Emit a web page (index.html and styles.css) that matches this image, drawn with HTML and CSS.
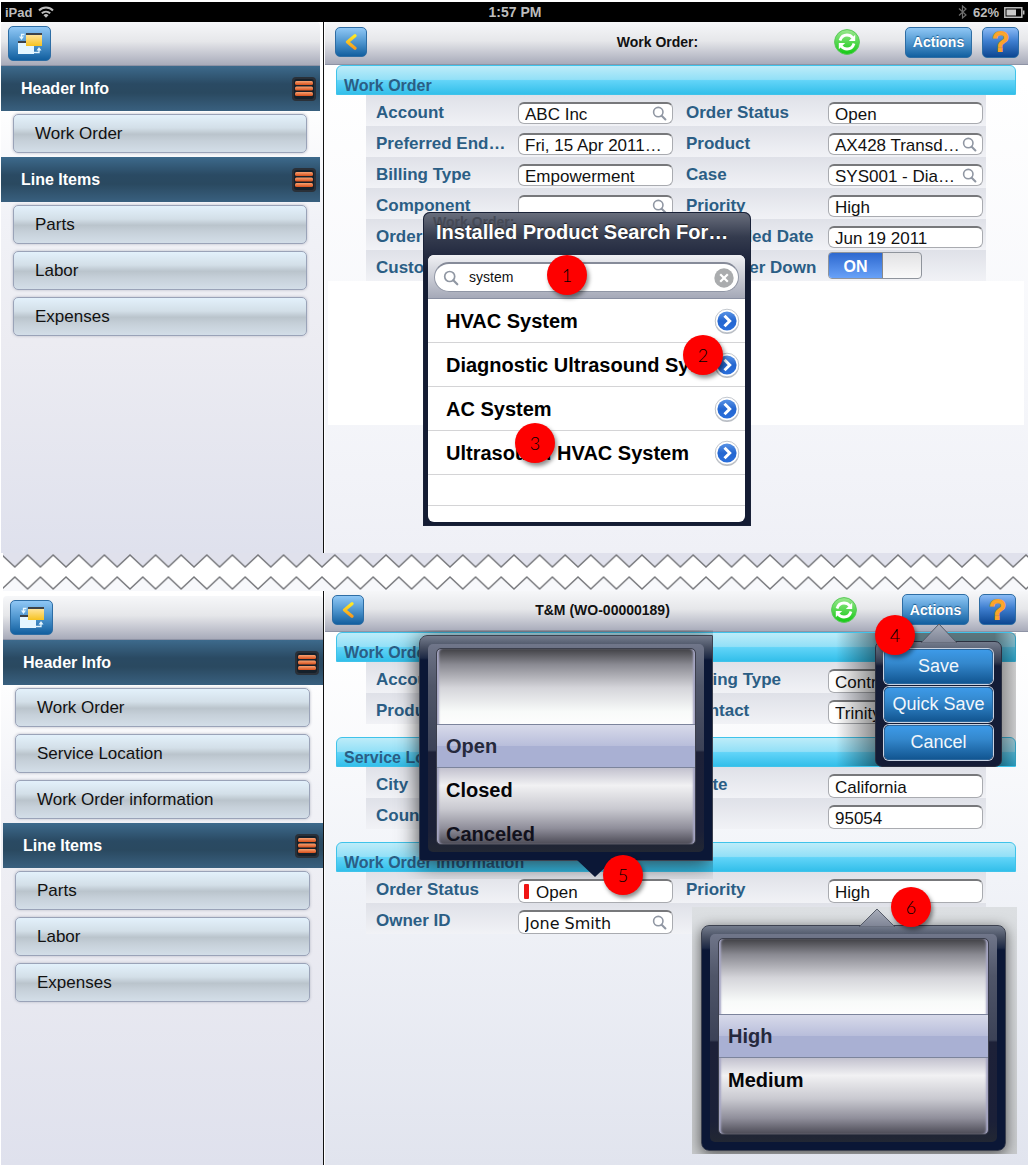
FILE: index.html
```html
<!DOCTYPE html>
<html lang="en">
<head>
<meta charset="utf-8">
<title>Work Order</title>
<link rel="stylesheet" href="styles.css">
</head>
<body>
<svg class="sprite" aria-hidden="true">
  <defs>
    <linearGradient id="gold" x1="0" y1="0" x2="0" y2="1"><stop offset="0" stop-color="#ffe49a"/><stop offset="1" stop-color="#f6c21f"/></linearGradient>
    <linearGradient id="green" x1="0" y1="0" x2="0" y2="1"><stop offset="0" stop-color="#9be88f"/><stop offset="1" stop-color="#12c912"/></linearGradient>
    <linearGradient id="blue" x1="0" y1="0" x2="0" y2="1"><stop offset="0" stop-color="#5a94e6"/><stop offset=".5" stop-color="#2466d0"/><stop offset="1" stop-color="#2a6fdc"/></linearGradient>
    <linearGradient id="chev" x1="0" y1="0" x2="0" y2="1"><stop offset="0" stop-color="#ffe925"/><stop offset="1" stop-color="#f99c1c"/></linearGradient>
    <linearGradient id="rust" x1="0" y1="0" x2="0" y2="1"><stop offset="0" stop-color="#f7a272"/><stop offset="1" stop-color="#d8501c"/></linearGradient>
    <linearGradient id="tip" x1="0" y1="0" x2="0" y2="1"><stop offset="0" stop-color="#a9aebb"/><stop offset="1" stop-color="#7d8394"/></linearGradient>
  </defs>
  <symbol id="i-switch" viewBox="0 0 26 22">
    <rect x="1" y="9" width="16" height="12" fill="#e4f6ff"/><rect x="1" y="8" width="16" height="2" fill="#3d4248"/>
    <rect x="9" y="2" width="16" height="11" fill="url(#gold)"/><rect x="9" y="0" width="16" height="2" fill="#3d4248"/>
    <path d="M7.500 1.500h-3V4" fill="none" stroke="#e4f6ff" stroke-width="1.300"/><path d="M2 3.500h5L4.500 7z" fill="#e4f6ff"/>
    <path d="M13 19.500h9V17" fill="none" stroke="#e4f6ff" stroke-width="1.300"/><path d="M19.500 17.500h5L22 14z" fill="#e4f6ff"/>
  </symbol>
  <symbol id="i-list" viewBox="0 0 24 24">
    <rect width="24" height="24" rx="4" fill="#2a3038"/><rect x="2" y="2" width="20" height="20" rx="3" fill="#15202a"/>
    <g fill="url(#rust)"><rect x="3" y="4" width="18" height="4" rx="1.500"/><rect x="3" y="9.500" width="18" height="4" rx="1.500"/><rect x="3" y="15" width="18" height="4" rx="1.500"/></g>
  </symbol>
  <symbol id="i-back" viewBox="0 0 12 16"><path d="M10 1.800L2.500 8l7.500 6.200" fill="none" stroke="url(#chev)" stroke-width="3.200" stroke-linecap="round" stroke-linejoin="round"/></symbol>
  <symbol id="i-sync" viewBox="0 0 26 26">
    <circle cx="13" cy="13" r="12.400" fill="url(#green)" stroke="#58c858"/>
    <path d="M6 11.500C7.200 7.600 10 6 13 6c2.600 0 4.400 1 5.800 2.800" fill="none" stroke="#fff" stroke-width="2.800"/>
    <path d="M21.200 5.800v6.200h-6.400z" fill="#fff"/>
    <path d="M20 14.500c-1.200 3.900-4 5.500-7 5.500-2.600 0-4.400-1-5.800-2.800" fill="none" stroke="#fff" stroke-width="2.800"/>
    <path d="M4.800 20.200V14h6.400z" fill="#fff"/>
  </symbol>
  <symbol id="i-find" viewBox="0 0 16 16"><circle cx="6.700" cy="6.500" r="5" fill="none" stroke="#9097a3" stroke-width="1.700"/><path d="M10.300 10.300l4 4" stroke="#9097a3" stroke-width="2.200" stroke-linecap="round"/></symbol>
  <symbol id="i-clear" viewBox="0 0 20 20"><circle cx="10" cy="10" r="9.700" fill="#aaacae"/><path d="M6.200 6.200l7.600 7.600M13.800 6.200l-7.600 7.600" stroke="#fff" stroke-width="2.200"/></symbol>
  <symbol id="i-go" viewBox="0 0 26 26">
    <circle cx="13" cy="14" r="12" fill="#8d949e" opacity=".6"/><circle cx="13" cy="13" r="11.800" fill="#fff" stroke="#b3b9c2" stroke-width=".8"/><circle cx="13" cy="13" r="9.600" fill="url(#blue)"/>
    <path d="M10.500 7.800l5.200 5.200-5.200 5.200" fill="none" stroke="#fff" stroke-width="3"/>
  </symbol>
</svg>

<header class="status">
  <span class="status-side">iPad
    <svg width="16" height="12" viewBox="0 0 16 12" aria-label="Wi-Fi"><g fill="none" stroke="#bdbdbd" stroke-width="2"><path d="M1 4.500C5 .5 11 .5 15 4.500"/><path d="M3.800 7.300c2.400-2.200 6-2.200 8.400 0"/></g><path d="M5.500 9.300a3.500 3.500 0 015 0L8 11.800z" fill="#bdbdbd"/></svg>
  </span>
  <span class="status-time">1:57 PM</span>
  <span class="status-side status-right">
    <svg width="10" height="14" viewBox="0 0 10 14" aria-label="Bluetooth"><path d="M1 3.500l7 6.500-3.500 3V1L8 4 1 10.500" fill="none" stroke="#6f6f6f" stroke-width="1.200"/></svg>
    <span>62%</span>
    <svg width="21" height="11" viewBox="0 0 21 11" aria-label="Battery"><path d="M.8.800h17v9.400H.8zM19.700 3.500v4" fill="none" stroke="#bdbdbd" stroke-width="1.500"/><path d="M2.500 2.500h9.500v6H2.500z" fill="#c9c9c9"/></svg>
  </span>
</header>

<section class="screen">
  <nav class="side">
    <div class="bar bar-side"><button class="btn btn-switch" aria-label="Switch view"><svg width="26" height="22"><use href="#i-switch"/></svg></button></div>
    <h2 class="group">Header Info <svg width="24" height="24"><use href="#i-list"/></svg></h2>
    <div class="items"><button>Work Order</button></div>
    <h2 class="group">Line Items <svg width="24" height="24"><use href="#i-list"/></svg></h2>
    <div class="items"><button>Parts</button><button>Labor</button><button>Expenses</button></div>
  </nav>
  <main class="main">
    <div class="bar">
      <button class="btn btn-back" aria-label="Back"><svg width="12" height="16"><use href="#i-back"/></svg></button>
      <h1 class="title title-wide">Work Order:</h1>
      <button class="sync" aria-label="Sync"><svg width="26" height="26"><use href="#i-sync"/></svg></button>
      <button class="btn btn-actions">Actions</button>
      <button class="btn btn-help" aria-label="Help">?</button>
    </div>
    <h2 class="caption">Work Order</h2>
    <div class="rows">
      <div class="row">
        <label for="a1">Account</label><div class="field"><input id="a1" value="ABC Inc"><svg width="15" height="15"><use href="#i-find"/></svg></div>
        <label for="a2">Order Status</label><div class="field"><input id="a2" value="Open"></div>
      </div>
      <div class="row">
        <label for="a3">Preferred End…</label><div class="field"><input id="a3" value="Fri, 15 Apr 2011…"></div>
        <label for="a4">Product</label><div class="field"><input id="a4" value="AX428 Transd…"><svg width="15" height="15"><use href="#i-find"/></svg></div>
      </div>
      <div class="row">
        <label for="a5">Billing Type</label><div class="field"><input id="a5" value="Empowerment"></div>
        <label for="a6">Case</label><div class="field"><input id="a6" value="SYS001 - Dia…"><svg width="15" height="15"><use href="#i-find"/></svg></div>
      </div>
      <div class="row">
        <label for="a7">Component</label><div class="field"><input id="a7" value=""><svg width="15" height="15"><use href="#i-find"/></svg></div>
        <label for="a8">Priority</label><div class="field"><input id="a8" value="High"></div>
      </div>
      <div class="row">
        <label for="a9">Order Type</label><div class="field"><input id="a9" value=""></div>
        <label for="a10">Scheduled Date</label><div class="field"><input id="a10" value="Jun 19 2011"></div>
      </div>
      <div class="row">
        <label for="a11">Customer</label><div class="field"><input id="a11" value=""></div>
        <label for="a12">Customer Down</label><div class="switch"><input type="checkbox" id="a12" checked><span>ON</span></div>
      </div>
    </div>
    <div class="blank"></div>

    <div class="lookup">
      <span class="lookup-ghost" aria-hidden="true">Work Order:</span>
      <h3>Installed Product Search For…</h3>
      <div class="lookup-body">
        <div class="lookup-search">
          <label class="pill"><svg width="16" height="16"><use href="#i-find"/></svg><input aria-label="Search" value="system"><svg width="20" height="20"><use href="#i-clear"/></svg></label>
        </div>
        <ul>
          <li><span>HVAC System</span><button aria-label="Details"><svg width="26" height="26"><use href="#i-go"/></svg></button></li>
          <li><span>Diagnostic Ultrasound System</span><button aria-label="Details"><svg width="26" height="26"><use href="#i-go"/></svg></button></li>
          <li><span>AC System</span><button aria-label="Details"><svg width="26" height="26"><use href="#i-go"/></svg></button></li>
          <li><span>Ultrasound HVAC System</span><button aria-label="Details"><svg width="26" height="26"><use href="#i-go"/></svg></button></li>
          <li class="short"></li>
          <li class="last"></li>
        </ul>
      </div>
      <span class="badge badge-1">1</span><span class="badge badge-2">2</span><span class="badge badge-3">3</span>
    </div>
  </main>
</section>

<svg class="tear" width="100%" height="38" aria-hidden="true">
  <defs>
    <pattern id="zigA" width="25.600" height="38" patternUnits="userSpaceOnUse" x="1"><path d="M0 0V2l12.800 12L25.600 2V0z" fill="#e0e1ec"/><path d="M-1 1L12.800 14 26.600 1" fill="none" stroke="#77787c" stroke-width="1.500"/></pattern>
    <pattern id="zigB" width="25.600" height="38" patternUnits="userSpaceOnUse" x="1"><path d="M0 38v-2l12.800-12 12.800 12v2z" fill="#f7f8fb"/><path d="M-1 37L12.800 24 26.600 37" fill="none" stroke="#77787c" stroke-width="1.500"/></pattern>
  </defs>
  <rect x="2" width="100%" height="38" fill="url(#zigA)"/><rect x="2" width="100%" height="38" fill="url(#zigB)"/>
</svg>

<section class="screen screen-2">
  <nav class="side">
    <div class="bar bar-side"><button class="btn btn-switch" aria-label="Switch view"><svg width="26" height="22"><use href="#i-switch"/></svg></button></div>
    <h2 class="group">Header Info <svg width="24" height="24"><use href="#i-list"/></svg></h2>
    <div class="items"><button>Work Order</button><button>Service Location</button><button>Work Order information</button></div>
    <h2 class="group">Line Items <svg width="24" height="24"><use href="#i-list"/></svg></h2>
    <div class="items"><button>Parts</button><button>Labor</button><button>Expenses</button></div>
  </nav>
  <main class="main">
    <div class="bar">
      <button class="btn btn-back" aria-label="Back"><svg width="12" height="16"><use href="#i-back"/></svg></button>
      <h1 class="title title-record">T&amp;M (WO-00000189)</h1>
      <button class="sync" aria-label="Sync"><svg width="26" height="26"><use href="#i-sync"/></svg></button>
      <button class="btn btn-actions">Actions</button>
      <button class="btn btn-help" aria-label="Help">?</button>
    </div>
    <h2 class="caption">Work Order</h2>
    <div class="rows">
      <div class="row">
        <label for="b1">Account</label><div class="field"><input id="b1"></div>
        <label for="b2">Billing Type</label><div class="field"><input id="b2" value="Contract"></div>
      </div>
      <div class="row">
        <label for="b3">Product</label><div class="field"><input id="b3"></div>
        <label for="b4">Contact</label><div class="field"><input id="b4" value="Trinity"></div>
      </div>
    </div>
    <h2 class="caption">Service Location</h2>
    <div class="rows">
      <div class="row">
        <label for="b5">City</label><div class="field"><input id="b5"></div>
        <label for="b6">State</label><div class="field"><input id="b6" value="California"></div>
      </div>
      <div class="row">
        <label for="b7">Country</label><div class="field"><input id="b7"></div>
        <label for="b8">Zip</label><div class="field"><input id="b8" value="95054"></div>
      </div>
    </div>
    <h2 class="caption">Work Order Information</h2>
    <div class="rows">
      <div class="row">
        <label for="b9">Order Status</label><div class="field field-required"><input id="b9" value="Open"></div>
        <label for="b10">Priority</label><div class="field"><input id="b10" value="High"></div>
      </div>
      <div class="row">
        <label for="b11">Owner ID</label><div class="field field-alt"><input id="b11" value="Jone Smith"><svg width="15" height="15"><use href="#i-find"/></svg></div>
      </div>
    </div>

    <div class="picker picker-status">
      <div class="wheel">
        <ul role="listbox" aria-label="Order Status">
          <li role="option" aria-selected="true">Open</li><li role="option">Closed</li><li role="option">Canceled</li>
        </ul>
      </div>
      <svg class="tip tip-down" width="36" height="18"><path d="M0 0h36L18 17z" fill="#0b1736"/></svg>
    </div>
    <span class="badge badge-5">5</span>

    <div class="priority">
      <div class="picker">
        <div class="wheel">
          <ul role="listbox" aria-label="Priority">
            <li role="option" aria-selected="true">High</li><li role="option">Medium</li>
          </ul>
        </div>
        <svg class="tip tip-up" width="36" height="19"><path d="M0 19L18 1l18 18z" fill="url(#tip)" stroke="#555b68"/></svg>
      </div>
      <span class="badge badge-6">6</span>
    </div>

    <div class="menu-shadow"></div>
    <div class="menu">
      <svg class="tip tip-menu" width="36" height="20"><path d="M0 20L18 1l18 19z" fill="url(#tip)" stroke="#555b68"/></svg>
      <button>Save</button><button>Quick Save</button><button>Cancel</button>
      <span class="badge badge-4">4</span>
    </div>
  </main>
</section>
</body>
</html>
```
FILE: styles.css
```css
* { box-sizing: border-box; }

body {
  margin: 0;
  padding: 2px 2px 1px 1px;
  min-height: 100vh;
  display: flex;
  flex-direction: column;
  background: #fff;
  font-family: "Liberation Sans", Arial, sans-serif;
  color: #111;
}

h1, h2, h3, ul { margin: 0; padding: 0; list-style: none; }
button, input { font: inherit; color: inherit; margin: 0; }
button { cursor: pointer; padding: 0; border: 0; background: none; }
svg { display: block; flex: none; }
.sprite { position: absolute; width: 0; height: 0; }

/* Status bar */
.status {
  display: grid;
  grid-template-columns: 1fr auto 1fr;
  align-items: center;
  height: 20px;
  padding: 0 3px 0 4px;
  background: #000;
  color: #bdbdbd;
  font-size: 14px;
  font-weight: bold;
}
.status-side { display: flex; align-items: center; gap: 6px; font-size: 13px; }
.status-right { justify-content: flex-end; gap: 5px; }

/* Screens */
.screen { display: flex; }
.screen-2 { flex: 1; }

.side {
  flex: none;
  width: 323px;
  padding-right: 3px;
  border-right: 1px solid #111;
  background: linear-gradient(#fff 80px, #f1f2f7 200px, #ececf2 320px, #dfe1ed);
}
.screen-2 .side { padding: 5px 0 0 2px; }

.main {
  position: relative;
  flex: 1;
  min-width: 0;
  margin-left: 1px;
  background: linear-gradient(#fff 60px, #f5f6fa 70%, #eff0f6);
}
.screen-2 .main { background: linear-gradient(#fff 60px, #f1f3f8 50%, #e1e4ee); }

.bar {
  display: flex;
  align-items: center;
  height: 43px;
  padding: 0 9px 2px 10px;
  border-bottom: 1px solid #8e93a5;
  border-radius: 4px 4px 0 0;
  background: linear-gradient(#f6f7f9, #e6e7ea 45%, #c4c6d0 75%, #a8abba);
}
.screen-2 .main .bar { height: 41px; padding: 0 12px 3px 7px; border-radius: 0; }
.side .bar-side { height: 44px; padding: 0 7px; }

.btn {
  display: flex;
  align-items: center;
  justify-content: center;
  border: 1px solid #2e6da4;
  border-radius: 5px;
  background: linear-gradient(#8fc7f5, #4f96cf 50%, #125f9f);
  color: #fff;
}
.btn-switch { width: 43px; height: 35px; }
.btn-back { width: 32px; height: 30px; }
.btn-actions { width: 67px; height: 31px; margin-left: 45px; font-size: 14px; font-weight: bold; text-shadow: 0 -1px 1px #1d5c92; }
.btn-help {
  width: 37px;
  height: 31px;
  margin-left: 10px;
  background: linear-gradient(#8abaf5, #3f7fd0 45%, #0d4792);
  color: #ffbe3a;
  font-size: 28px;
  line-height: 28px;
  -webkit-text-stroke: 2px #fba32a;
  text-shadow: 0 0 2px #a8501c;
}
.title { flex: 1; text-align: center; font-size: 14px; font-weight: bold; }
.title-wide { padding-left: 114px; }
.title-record { padding-left: 10px; }

.group {
  display: flex;
  align-items: center;
  justify-content: space-between;
  height: 45px;
  padding: 0 4px 0 20px;
  background: linear-gradient(#3d6a8c, #2a4a63 40%, #2a4960 60%, #39607f);
  color: #fff;
  font-size: 16px;
}
.items { display: flex; flex-direction: column; gap: 7px; padding: 3px 13px 4px 12px; }
.items button {
  height: 39px;
  padding: 0 21px;
  border: 1px solid #9aa3b8;
  border-radius: 5px;
  background: linear-gradient(#e3f1fb, #d3dfe8 35%, #bac4cc 52%, #c6d0d9 70%, #d3dee8);
  box-shadow: 0 0 3px #b5b8c4;
  text-align: left;
  font-size: 17px;
}

/* Form */
.caption {
  height: 30px;
  margin: 0 12px 0 11px;
  padding: 0 7px;
  border: 1px solid #3fc3ea;
  border-radius: 6px 6px 0 0;
  background: linear-gradient(#bdecf9, #93e0f7 48%, #62d4f8 52%, #33bfea);
  color: #2b5e85;
  font-size: 16px;
  line-height: 39px;
}
.rows { margin: 0 42px 13px 41px; }
.row {
  display: grid;
  grid-template-columns: 142fr 155fr 155fr 155fr;
  align-items: start;
  height: 31px;
  padding: 0 3px 0 10px;
  background: linear-gradient(#dfe1e8, #f1f2f6);
}
.row label { padding-top: 2px; line-height: 31px; font-size: 17px; font-weight: bold; color: #2b5e85; white-space: nowrap; }
.row label:nth-of-type(2) { padding-left: 13px; }

.field {
  display: flex;
  align-items: center;
  height: 22px;
  margin-top: 7px;
  padding: 0 5px;
  border: 1px solid #a9abb0;
  border-top: 2px solid #77787b;
  border-radius: 6px;
  background: #fff;
  overflow: hidden;
}
.field input { flex: 1; min-width: 0; height: 22px; padding: 3px 0 0 1px; border: 0; background: none; font-size: 17px; outline: none; }
.screen-2 .field { height: 24px; }
.screen-2 .field input { padding-top: 2px; }
.field-required::before { content: ""; width: 5px; height: 15px; margin-right: 6px; background: #f01414; border-radius: 1px; }
.field-alt input { font-family: "DejaVu Sans", sans-serif; font-size: 16px; }

.switch { position: relative; width: 94px; height: 27px; margin-top: 2px; border: 1px solid #8f949c; border-radius: 4px; background: linear-gradient(#e2e2e4, #fafafa); overflow: hidden; }
.switch input { position: absolute; inset: 0; width: 100%; height: 100%; opacity: 0; }
.switch span { display: block; width: 54px; background: linear-gradient(#2d68cf, #6da6fb); color: #fff; font-size: 16px; font-weight: bold; line-height: 27px; text-align: center; border-right: 1px solid #888; }

.screen:not(.screen-2) .rows { margin-bottom: 0; }
.blank { height: 144px; margin: 0 4px 128px 3px; background: #fff; }

/* Product lookup */
.lookup {
  position: absolute;
  left: 98px;
  top: 190px;
  width: 328px;
  padding: 0 6px 4px 5px;
  border-radius: 7px 7px 0 0;
  background: linear-gradient(#6b707e, #343b4e 25px, #232a40 43px, #141c33 60px);
  box-shadow: inset 0 0 0 1px #1a2238;
}
.lookup h3 { position: relative; height: 43px; padding-left: 8px; font-size: 20px; line-height: 40px; color: #fff; white-space: nowrap; text-shadow: 0 -1px 1px #222; }
.lookup-ghost { position: absolute; left: 10px; top: 2px; font-size: 14px; font-weight: bold; color: #454955; }
.lookup-body { border-radius: 6px; background: #fff; overflow: hidden; }
.lookup-search { padding: 7px 6px 6px; border-bottom: 1px solid #8a90a2; background: linear-gradient(#f0f1f4, #a5a9b8); }
.pill { display: flex; align-items: center; gap: 10px; height: 30px; padding: 0 4px 0 8px; border: 1px solid #9096a5; border-top: 2px solid #868b99; border-radius: 15px; background: #fff; }
.pill input { flex: 1; min-width: 0; padding: 0 0 2px; border: 0; background: none; font-size: 14px; outline: none; }
.lookup li { display: flex; align-items: center; gap: 2px; height: 44px; padding: 0 5px 0 18px; border-bottom: 1px solid #d4d4d6; font-size: 20px; font-weight: bold; color: #000; }
.lookup li span { flex: 1; min-width: 0; overflow: hidden; text-overflow: ellipsis; white-space: nowrap; line-height: 26px; }
.lookup li.short { height: 31px; }
.lookup li.last { height: 16px; border: 0; }

/* Wheel pickers */
.picker {
  position: relative;
  padding: 8px;
  border: 1px solid #3d4250;
  border-radius: 8px;
  background: linear-gradient(#747c8d, #454d60 12px, #1d2945 22px, #0b1736 24px);
  box-shadow: 0 3px 22px rgba(0, 0, 0, .75);
}
.wheel { height: 208px; padding: 4px 8px 7px; border-radius: 5px; background: linear-gradient(#70768a, #505669 20%, #3c4257 51%, #1d2138 52%, #1b2038 90%, #222733); }
.wheel ul {
  height: 197px;
  padding-top: 75px;
  border: 1px solid #3c3f4c;
  border-radius: 5px;
  background: linear-gradient(#414146, #8a8a92 8%, #d5d5da 20%, #f8faf9 32%, #fdfdfd 38%, #fbfbfc 58%, #c2c1ce 61%, #f1f1f3 70%, #c9c9d0 82%, #8f8e9a 92%, #4c4b56);
  box-shadow: inset 3px 0 2px -1px #a6a6c4, inset -3px 0 2px -1px #a6a6c4;
  overflow: hidden;
}
.wheel li { height: 44px; padding-left: 9px; font-size: 20px; font-weight: bold; line-height: 44px; color: #050508; }
.wheel li[aria-selected] { border: 1px solid #7c849c; border-width: 1px 0; background: linear-gradient(#d8daea, #b9bedb 49%, #a9b0d3 51%); color: #26293c; line-height: 42px; }
.wheel li:nth-child(3) { color: #11111c; }

.picker-status { position: absolute; left: 94px; top: 44px; width: 294px; border-radius: 8px 0 0 2px; clip-path: inset(-5px 0 -18px -40px); }

.priority { position: absolute; right: 11px; top: 316px; width: 325px; padding: 18px 11px 3px 9px; background: linear-gradient(#dcdfe2, #c9cbcd); }
.priority .picker { box-shadow: 0 3px 14px rgba(0, 0, 0, .6); clip-path: inset(-18px -11px -3px -9px); }

.tip { position: absolute; }
.tip-down { left: 157px; top: 224px; }
.tip-up { left: 157px; top: -18px; }
.tip-menu { left: 45px; top: -19px; }

/* Actions menu */
.menu-shadow { position: absolute; right: 12px; top: 42px; width: 180px; height: 133px; background: linear-gradient(90deg, transparent, rgba(0, 0, 0, .5) 25%, rgba(0, 0, 0, .5) 88%, rgba(0, 0, 0, .2)); }
.menu {
  position: absolute;
  right: 26px;
  top: 50px;
  display: flex;
  flex-direction: column;
  gap: 3px;
  width: 127px;
  padding: 7px 8px 6px;
  border: 1px solid #2b3040;
  border-radius: 7px;
  background: linear-gradient(#747c8d, #333b50 20px, #141c36 24px);
}
.menu button { height: 35px; border: 1px solid #2a669c; border-radius: 5px; background: linear-gradient(#3d9ae8, #3488cd 40%, #125692); color: #f2f7fc; font-size: 18px; box-shadow: 0 0 0 1px #c9d3e2; }

/* Numbered callouts */
.badge { position: absolute; width: 40px; height: 40px; border-radius: 50%; background: #fe0000; box-shadow: 2px 3px 4px rgba(0, 0, 0, .45); font-family: Lato, sans-serif; font-size: 18px; font-weight: 300; line-height: 40px; text-align: center; color: #000; }
.badge-1 { left: 124px; top: 43px; }
.badge-2 { left: 260px; top: 123px; }
.badge-3 { left: 92px; top: 211px; }
.badge-4 { left: -1px; top: -27px; }
.badge-5 { left: 278px; top: 264px; }
.badge-6 { right: 86px; top: -20px; }
```
